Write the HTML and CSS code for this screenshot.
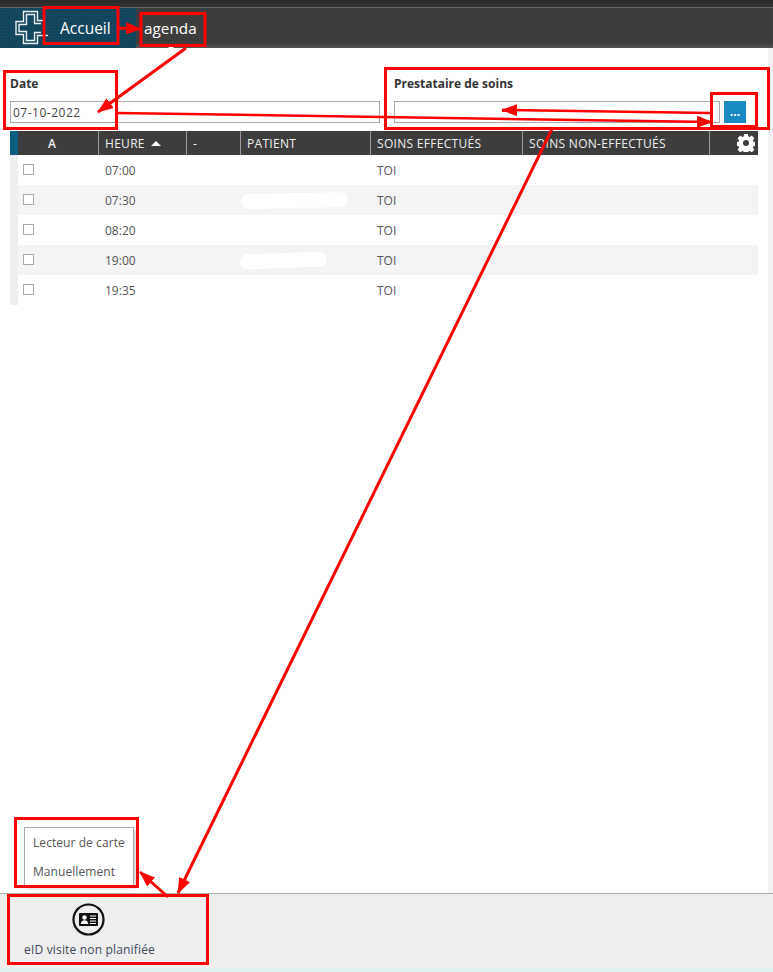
FILE: index.html
```html
<!DOCTYPE html>
<html lang="fr">
<head>
<meta charset="utf-8">
<title>Agenda</title>
<link rel="stylesheet" href="styles.css">
</head>
<body>
<div class="page">
  <div class="topstrip"></div>
  <header class="nav">
    <div class="home">
      <svg class="logo" width="36" height="36" viewBox="14 9 36 36" fill="none" stroke="#e8eef0" stroke-width="1.400">
        <path d="M44 19.500H37.500V10.500H23.500V20.500H16V33.500H23.500V42.500H37.500V34.500H48"/>
        <path d="M41 22.500H34.500V13.500H26.500V23.500H19V30.500H26.500V39.500H34.500V31.500H41"/>
      </svg>
      <span class="home-label">Accueil</span>
      <span class="caret"></span>
    </div>
    <div class="nav-item">agenda<span class="nav-tick"></span></div>
  </header>
  <main class="main">
    <div class="filters">
      <div class="field field-date">
        <label class="label">Date</label>
        <div class="input date-value">07-10-2022</div>
      </div>
      <div class="field field-care">
        <label class="label">Prestataire de soins</label>
        <div class="input-row">
          <div class="input"></div>
          <div class="dots-btn">...</div>
        </div>
      </div>
    </div>
    <div class="table">
      <div class="row head">
        <div class="cell c-mark"></div>
        <div class="cell c-a center">A</div>
        <div class="cell c-time">HEURE <span class="sort"></span></div>
        <div class="cell c-dash">-</div>
        <div class="cell c-patient">PATIENT</div>
        <div class="cell c-done">SOINS EFFECTUÉS</div>
        <div class="cell c-undone">SOINS NON-EFFECTUÉS</div>
        <div class="cell c-gear">
          <svg width="18" height="18" viewBox="0 0 24 24" fill="#fff"><path fill-rule="evenodd" d="M9.500 0h5l.6 3.400 1.700.7 2.900-2 3.500 3.500-2 2.900.7 1.700 3.400.6v5l-3.400.6-.7 1.700 2 2.900-3.500 3.500-2.900-2-1.700.7-.6 3.400h-5l-.6-3.400-1.700-.7-2.900 2-3.500-3.500 2-2.900-.7-1.700-3.400-.6v-5l3.400-.6.7-1.700-2-2.900 3.500-3.500 2.900 2 1.700-.7zM12 8a4 4 0 1 0 0 8 4 4 0 0 0 0-8z"/></svg>
        </div>
      </div>
      <div class="row">
        <div class="cell c-mark gutter"></div>
        <div class="cell c-a"><span class="check"></span></div>
        <div class="cell c-time">07:00</div>
        <div class="cell c-dash"></div>
        <div class="cell c-patient"></div>
        <div class="cell c-done">TOI</div>
        <div class="cell c-undone"></div>
        <div class="cell c-gear"></div>
      </div>
      <div class="row alt">
        <div class="cell c-mark gutter"></div>
        <div class="cell c-a"><span class="check"></span></div>
        <div class="cell c-time">07:30</div>
        <div class="cell c-dash"></div>
        <div class="cell c-patient"><span class="blot blot-long"></span></div>
        <div class="cell c-done">TOI</div>
        <div class="cell c-undone"></div>
        <div class="cell c-gear"></div>
      </div>
      <div class="row">
        <div class="cell c-mark gutter"></div>
        <div class="cell c-a"><span class="check"></span></div>
        <div class="cell c-time">08:20</div>
        <div class="cell c-dash"></div>
        <div class="cell c-patient"></div>
        <div class="cell c-done">TOI</div>
        <div class="cell c-undone"></div>
        <div class="cell c-gear"></div>
      </div>
      <div class="row alt">
        <div class="cell c-mark gutter"></div>
        <div class="cell c-a"><span class="check"></span></div>
        <div class="cell c-time">19:00</div>
        <div class="cell c-dash"></div>
        <div class="cell c-patient"><span class="blot blot-short"></span></div>
        <div class="cell c-done">TOI</div>
        <div class="cell c-undone"></div>
        <div class="cell c-gear"></div>
      </div>
      <div class="row">
        <div class="cell c-mark gutter"></div>
        <div class="cell c-a"><span class="check"></span></div>
        <div class="cell c-time">19:35</div>
        <div class="cell c-dash"></div>
        <div class="cell c-patient"></div>
        <div class="cell c-done">TOI</div>
        <div class="cell c-undone"></div>
        <div class="cell c-gear"></div>
      </div>
    </div>
    <div class="scroll-edge"></div>
  </main>
  <footer class="footer">
    <div class="menu">
      <div class="menu-item">Lecteur de carte</div>
      <div class="menu-item">Manuellement</div>
    </div>
    <div class="eid">
      <svg class="eid-icon" width="33" height="33" viewBox="0 0 33 33">
        <circle cx="16.500" cy="16.500" r="15" fill="none" stroke="#111" stroke-width="2.200"/>
        <rect x="7" y="10" width="19" height="13" rx="1" fill="#111"/>
        <circle cx="12.500" cy="14.500" r="2.200" fill="#fff"/>
        <path d="M8.800 21c.2-2.800 1.800-3.800 3.700-3.800s3.500 1 3.700 3.800z" fill="#fff"/>
        <path d="M18 13h6M18 15.500h6M18 18h6M18 20.500h6" stroke="#fff" stroke-width="1"/>
      </svg>
      <div class="eid-label">eID visite non planifiée</div>
    </div>
    <div class="foot-strip"></div>
  </footer>
  <svg class="marks" width="773" height="972" viewBox="0 0 773 972" fill="none" stroke="#f00" stroke-width="3">
    <defs>
      <marker id="head" markerUnits="userSpaceOnUse" markerWidth="16" markerHeight="12" refX="15" refY="6" orient="auto">
        <path d="M0 0L16 6L0 12z" fill="#f00" stroke="none"/>
      </marker>
    </defs>
    <rect x="44" y="7.500" width="74" height="36"/>
    <rect x="141" y="13.500" width="64" height="32"/>
    <rect x="4.500" y="71.500" width="112" height="57"/>
    <rect x="385.500" y="68.500" width="383" height="60"/>
    <rect x="711.500" y="93.500" width="45" height="33"/>
    <rect x="15.500" y="818.500" width="122" height="68"/>
    <rect x="8.500" y="895.500" width="199" height="68"/>
    <path d="M118 28L141 29" marker-end="url(#head)"/>
    <path d="M186 48L98 112" marker-end="url(#head)"/>
    <path d="M117 113L712 122" marker-end="url(#head)" stroke-width="2.500"/>
    <path d="M711 113L502 110" marker-end="url(#head)" stroke-width="2.500"/>
    <path d="M552 129L178 893" marker-end="url(#head)"/>
    <path d="M168 897L140 872" marker-end="url(#head)"/>
  </svg>
</div>
</body>
</html>
```
FILE: styles.css
```css
* { box-sizing: border-box; }
html, body { margin: 0; padding: 0; }
body { font-family: "Open Sans", "Noto Sans", sans-serif; font-size: 12px; color: #555; background: #fff; }
.page { position: relative; width: 773px; height: 972px; overflow: hidden; display: flex; flex-direction: column; }

.topstrip { height: 8px; background: linear-gradient(#2c2c2c 0, #2c2c2c 3px, #333 3px, #333 7px, #666 7px); }
.nav { height: 40px; display: flex; background-color: #3c3c3c; background-image: radial-gradient(#424242 1px, transparent 1px); background-size: 3px 3px; box-shadow: inset 0 -5px 5px -4px #666; }
.home { width: 136px; display: flex; align-items: center; padding-left: 14px; background-color: #11455d; background-image: radial-gradient(#195268 1px, transparent 1px); background-size: 3px 3px; position: relative; }
.logo { flex: none; overflow: visible; }
.home-label { margin-left: 10px; font-size: 15.500px; color: #fff; }
.caret { margin-left: 6px; border-left: 3px solid transparent; border-right: 3px solid transparent; border-top: 3px solid #ddd; }
.nav-item { margin-left: 8px; width: 54px; padding-top: 10px; font-size: 15.300px; line-height: 20px; color: #fff; position: relative; }
.nav-tick { position: absolute; left: 24px; bottom: 0; border-left: 3px solid transparent; border-right: 3px solid transparent; border-bottom: 3px solid #fff; }

.main { flex: 1; position: relative; padding: 0 15px 0 10px; }
.filters { display: flex; padding-top: 27px; height: 83px; }
.field-date { width: 384px; }
.field-care { width: 352px; }
.label { display: block; font-weight: 700; font-size: 12px; line-height: 17px; color: #333; margin-bottom: 9px; }
.field-date .input { width: 370px; }
.input { height: 22px; border: 1px solid #aaa; padding: 0 2px; line-height: 22px; font-size: 12px; color: #444; background: #fff; }
.date-value { letter-spacing: .5px; }
.input-row { display: flex; gap: 4px; }
.input-row .input { width: 326px; }
.dots-btn { width: 22px; height: 22px; background: #1a8ac3; color: #fff; font-weight: 700; font-size: 12px; line-height: 22px; text-align: center; }

.table { width: 748px; }
.row { display: flex; height: 30px; background: #fff; }
.row.alt { background: #f4f4f4; }
.row.head { height: 24px; background-color: #3c3c3c; background-image: radial-gradient(#424242 1px, transparent 1px); background-size: 3px 3px; color: #fff; }
.cell { display: flex; align-items: center; padding: 0 6px; font-size: 12px; color: #555; flex: none; }
.head .cell { color: #eee; border-right: 1px solid #999; letter-spacing: .3px; }
.head .c-mark, .head .c-gear { border-right: 0; }
.head .c-a { font-weight: 600; }
.center { justify-content: center; }
.c-mark { width: 8px; padding: 0; }
.head .c-mark { background: #0a5f80; }
.gutter { background: #eee; }
.c-a { width: 81px; padding-left: 5px; }
.head .c-a { padding: 0 12px 0 0; }
.c-time { width: 88px; }
.c-dash { width: 54px; }
.c-patient { width: 130px; }
.c-done { width: 152px; }
.c-undone { width: 187px; }
.c-gear { width: 48px; justify-content: flex-end; padding: 0 3px 0 0; }
.check { width: 11px; height: 11px; border: 1px solid #aaa; background: #fff; margin-top: -2px; }
.sort { margin-left: 6px; border-left: 5px solid transparent; border-right: 5px solid transparent; border-bottom: 5px solid #fff; }
.blot { display: block; height: 15px; background: #fff; border-radius: 8px; }
.blot-long { width: 107px; margin-left: -6px; transform: rotate(-1deg); }
.blot-short { width: 87px; margin-left: -7px; transform: rotate(-2deg); }
.scroll-edge { position: absolute; right: 0; top: 0; bottom: 0; width: 5px; background: #f1f1f1; }

.footer { height: 79px; position: relative; background: #eee; border-top: 1px solid #aaa; display: flex; flex-direction: column; }
.menu { position: absolute; left: 24px; bottom: 86px; width: 110px; height: 59px; background: #fff; border: 1px solid #aaa; box-shadow: 2px 2px 4px rgba(0,0,0,.2); z-index: 2; }
.menu-item { height: 29px; line-height: 29px; padding-left: 8px; font-size: 12px; letter-spacing: .07px; color: #555; }
.eid { flex: 1; display: flex; flex-direction: column; align-items: center; width: 131px; margin-left: 24px; padding-top: 9px; }
.eid-icon { flex: none; margin-left: -2px; }
.eid-label { margin-top: 5px; font-size: 12px; line-height: 17px; letter-spacing: .17px; color: #3d4a5c; white-space: nowrap; }
.foot-strip { height: 4px; background: #dff1f1; }
.marks { position: absolute; left: 0; top: 0; z-index: 5; pointer-events: none; }
```
